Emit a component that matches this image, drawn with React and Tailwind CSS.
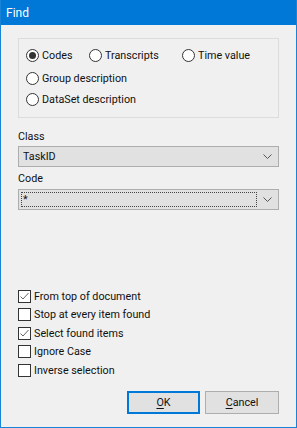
import React from 'react';

const font = { fontFamily: 'Roboto, "Noto Sans", sans-serif' };

const Radio = ({ label, checked, className = '' }) => (
    <label className={`flex items-center gap-[3px] ${className}`}>
        <span className="w-[13px] h-[13px] rounded-full border border-[#333] bg-white flex items-center justify-center shrink-0">
            {checked && <span className="w-[7px] h-[7px] rounded-full bg-[#333]" />}
        </span>
        <span className="leading-[15px]">{label}</span>
    </label>
);

const Check = ({ label, checked }) => (
    <label className="flex items-center gap-[3px] h-[18.5px]">
        <span className="w-[13px] h-[13px] border border-[#333] bg-white flex items-center justify-center shrink-0">
            {checked && (
                <svg width="11" height="11" viewBox="0 0 11 11">
                    <path d="M1.5 5.5 L4 8 L9.5 2" fill="none" stroke="#666" strokeWidth="1" />
                </svg>
            )}
        </span>
        <span className="leading-[15px]">{label}</span>
    </label>
);

const Chevron = () => (
    <svg width="9" height="5" viewBox="0 0 9 5" className="shrink-0">
        <path d="M0.5 0.5 L4.5 4.5 L8.5 0.5" fill="none" stroke="#555" strokeWidth="1" />
    </svg>
);

export default function App() {
    return (
        <div className="w-[297px] h-[428px] flex flex-col border-x border-b border-[#1883d7] text-[10.75px] text-[#111]" style={font}>
            {/* Title bar */}
            <div className="h-[25px] bg-[#0078d7] text-white text-[12px] flex items-center pl-[5px] shrink-0">Find</div>

            <div className="flex-1 bg-[#f0f0f0] pl-[17px] pr-[17px] flex flex-col">
                {/* Search target */}
                <div className="mt-[13px] h-[80px] border border-[#dcdcdc] pl-[7px] pt-[8px] flex flex-col">
                    <div className="flex items-center h-[16px]">
                        <Radio label="Codes" checked className="w-[63px]" />
                        <Radio label="Transcripts" className="w-[93px]" />
                        <Radio label="Time value" />
                    </div>
                    <Radio label="Group description" className="mt-[7px] h-[16px]" />
                    <Radio label="DataSet description" className="mt-[5px] h-[16px]" />
                </div>

                <div className="mt-[11px] leading-[15px]">Class</div>
                <div className="mt-[2px] h-[21px] bg-[#e1e1e1] border border-[#adadad] flex items-center pl-[4px] pr-[6px] justify-between">
                    <span className="leading-[15px]">TaskID</span>
                    <Chevron />
                </div>

                <div className="mt-[4px] leading-[15px]">Code</div>
                <div className="mt-[3px] h-[21px] bg-[#e1e1e1] border border-[#adadad] flex items-center p-[2px] pr-[6px] gap-[6px]">
                    <span className="flex-1 h-full border border-dotted border-[#444] leading-[13px] pl-[1px]">*</span>
                    <Chevron />
                </div>

                <div className="mt-[77px] flex flex-col">
                    <Check label="From top of document" checked />
                    <Check label="Stop at every item found" />
                    <Check label="Select found items" checked />
                    <Check label="Ignore Case" />
                    <Check label="Inverse selection" />
                </div>

                <div className="mt-[11px] flex justify-end gap-[5px]">
                    <button className="w-[73px] h-[23px] bg-[#e1e1e1] border-2 border-[#0078d7] leading-[15px]">
                        <span className="underline underline-offset-2">O</span>K
                    </button>
                    <button className="w-[74px] h-[23px] bg-[#e1e1e1] border border-[#adadad] leading-[15px]">
                        <span className="underline underline-offset-2">C</span>ancel
                    </button>
                </div>
            </div>
        </div>
    );
}
